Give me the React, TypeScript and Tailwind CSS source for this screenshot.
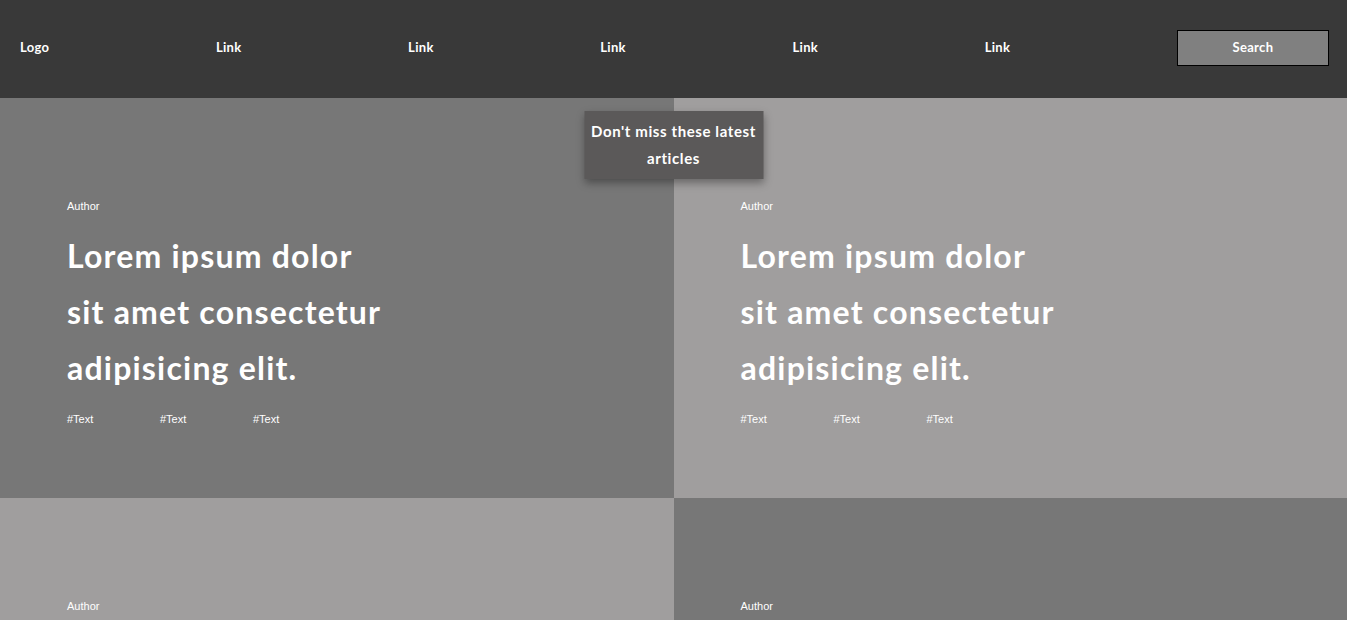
import React from 'react'

const navLinks = ['Link', 'Link', 'Link', 'Link', 'Link']

interface Article {
    id: number
    author: string
    title: string
    tags: string[]
    bg: string
}

const articles: Article[] = [
    { id: 1, author: 'Author', title: 'Lorem ipsum dolor sit amet consectetur adipisicing elit.', tags: ['#Text', '#Text', '#Text'], bg: 'bg-[#777777]' },
    { id: 2, author: 'Author', title: 'Lorem ipsum dolor sit amet consectetur adipisicing elit.', tags: ['#Text', '#Text', '#Text'], bg: 'bg-[#a09e9e]' },
    { id: 3, author: 'Author', title: 'Lorem ipsum dolor sit amet consectetur adipisicing elit.', tags: ['#Text', '#Text', '#Text'], bg: 'bg-[#a09e9e]' },
    { id: 4, author: 'Author', title: 'Lorem ipsum dolor sit amet consectetur adipisicing elit.', tags: ['#Text', '#Text', '#Text'], bg: 'bg-[#777777]' },
]

function ArticleCard({ article }: { article: Article }) {
    return (
        <div className={`${article.bg} h-[400px] pl-[67px] pt-[102px] text-white`}>
            <p className="font-['Liberation_Sans',Arial,sans-serif] text-[11px] leading-[13px]">{article.author}</p>
            <h2 className="mt-[15px] w-[320px] font-['Lato',sans-serif] text-[32px] font-bold leading-[56px] tracking-[1.2px]">
                {article.title}
            </h2>
            <div className="mt-[17px] flex font-['Liberation_Sans',Arial,sans-serif] text-[11px] leading-[13px]">
                {article.tags.map((tag, i) => (
                    <span key={i} className="w-[93px]">{tag}</span>
                ))}
            </div>
        </div>
    )
}

export default function App() {
    return (
        <div className="min-h-screen w-full bg-white font-['Lato',sans-serif]">
            {/* Navbar */}
            <nav className="flex h-[98px] items-center justify-between bg-[#393939] pb-[3px] pl-5 pr-[18px] text-[13px] font-bold tracking-[0.3px] text-white">
                <span>Logo</span>
                {navLinks.map((link, i) => (
                    <a key={i} href="#">{link}</a>
                ))}
                <button className="h-[36px] w-[152px] border border-black bg-[#808080] text-[13px] font-bold tracking-[0.3px] text-white">
                    Search
                </button>
            </nav>

            {/* Articles grid */}
            <div className="relative grid grid-cols-2">
                <div className="absolute left-1/2 top-[13px] z-10 w-[179px] -translate-x-1/2 bg-[#5b5959] py-[7px] text-center text-[15px] font-bold leading-[27px] tracking-[0.6px] text-white shadow-[0_4px_8px_rgba(0,0,0,0.35)]">
                    Don't miss these latest articles
                </div>
                {articles.map((article) => (
                    <ArticleCard key={article.id} article={article} />
                ))}
            </div>
        </div>
    )
}
